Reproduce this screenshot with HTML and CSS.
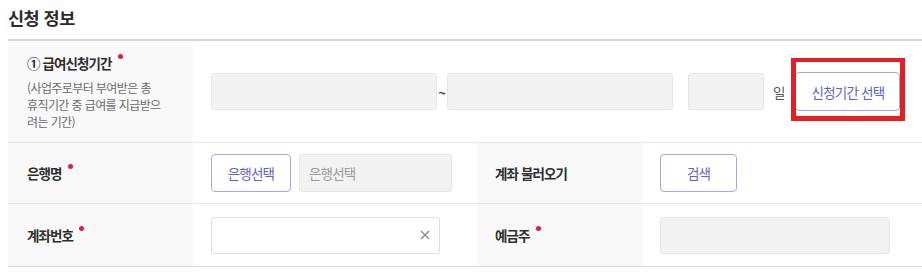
FILE: index.html
```html
<!DOCTYPE html>
<html lang="ko">
<head>
<meta charset="utf-8">
<title>신청 정보</title>
<link rel="stylesheet" href="styles.css">
</head>
<body>
<div class="page">
  <h2 class="title">신청 정보</h2>
  <div class="form">
    <div class="row row-tall">
      <div class="label label-first">
        <div class="label-main">① 급여신청기간<span class="req"></span></div>
        <div class="label-sub">(사업주로부터 부여받은 총<br>휴직기간 중 급여를 지급받으<br>려는 기간)</div>
      </div>
      <div class="cell cell-wide">
        <div class="field field-gray w-date"></div>
        <span class="tilde">~</span>
        <div class="field field-gray w-date"></div>
        <div class="field field-gray w-days"></div>
        <span class="unit">일</span>
        <div class="btn-wrap">
          <button class="btn btn-period">신청기간 선택</button>
          <span class="highlight"></span>
        </div>
      </div>
    </div>
    <div class="row">
      <div class="label label-first"><div class="label-main">은행명<span class="req"></span></div></div>
      <div class="cell">
        <button class="btn btn-bank">은행선택</button>
        <div class="field field-gray w-bank"><span class="placeholder">은행선택</span></div>
      </div>
      <div class="label label-second"><div class="label-main">계좌 불러오기</div></div>
      <div class="cell cell-second">
        <button class="btn btn-search">검색</button>
      </div>
    </div>
    <div class="row row-last">
      <div class="label label-first"><div class="label-main">계좌번호<span class="req"></span></div></div>
      <div class="cell">
        <div class="field field-white w-account">
          <svg class="clear" width="10" height="10" viewBox="0 0 10 10"><path d="M1 1L9 9M9 1L1 9" stroke="#8a8a8a" stroke-width="1.4" fill="none"/></svg>
        </div>
      </div>
      <div class="label label-second"><div class="label-main">예금주<span class="req"></span></div></div>
      <div class="cell cell-second">
        <div class="field field-gray w-holder"></div>
      </div>
    </div>
  </div>
</div>
</body>
</html>
```
FILE: styles.css
```css
* { box-sizing: border-box; }
html, body { margin: 0; padding: 0; background: #fff; }
body {
  font-family: "Noto Sans CJK KR", "Noto Sans", sans-serif;
  color: #333;
}
.page { padding-left: 8px; }
.title {
  margin: 6px 0 9px;
  font-size: 17.5px;
  line-height: 24px;
  font-weight: 700;
  letter-spacing: -0.5px;
  color: #2b2b2b;
}
.form {
  border-top: 2px solid #d6d6d6;
}
.row {
  display: grid;
  grid-template-columns: 185px 284px 165px 280px;
  border-bottom: 1px solid #e6e6e6;
  height: 61px;
}
.row-tall { height: 102px; }
.row-last { height: 63px; border-bottom: 1px solid #d9d9d9; }
.label {
  background: #f8f8f8;
  display: flex;
  flex-direction: column;
  justify-content: center;
}
.label-first { padding-left: 19px; }
.label-second { padding-left: 18px; }
.label-main {
  font-size: 13.5px;
  line-height: 20px;
  font-weight: 700;
  letter-spacing: -0.9px;
  color: #2e2e2e;
}
.label-sub {
  margin-top: 6px;
  font-size: 12px;
  line-height: 17px;
  letter-spacing: -0.6px;
  color: #6a6a6a;
}
.req {
  display: inline-block;
  width: 5px;
  height: 5px;
  border-radius: 50%;
  background: #e5194a;
  margin-left: 6px;
  vertical-align: top;
  margin-top: 1px;
}
.cell {
  display: flex;
  align-items: center;
  padding-left: 18px;
}
.cell-wide { grid-column: 2 / 5; }
.field {
  height: 37px;
  border-radius: 3px;
  display: flex;
  align-items: center;
}
.field-gray { background: #f2f2f2; border: 1px solid #e5e5e5; }
.field-white { background: #fff; border: 1px solid #dedede; }
.w-date { width: 226px; }
.w-days { width: 76px; margin-left: 15px; }
.w-bank { width: 153px; height: 38px; margin-left: 8px; padding-left: 9px; }
.w-account { width: 229px; justify-content: flex-end; padding-right: 9px; }
.w-holder { width: 230px; }
.tilde {
  width: 10px;
  text-align: center;
  font-size: 13px;
  font-weight: 700;
  color: #444;
  margin-top: 2px;
}
.unit {
  margin-left: 9px;
  font-size: 13.5px;
  color: #555;
}
.placeholder {
  font-size: 13.5px;
  letter-spacing: -0.8px;
  color: #999;
}
.btn {
  font-family: inherit;
  background: #fff;
  border: 1px solid #a3a7ea;
  border-radius: 4px;
  color: #5c62cc;
  font-size: 13.5px;
  letter-spacing: -0.8px;
  padding: 0;
  cursor: pointer;
}
.btn-wrap {
  position: relative;
  margin-left: 10px;
  display: flex;
}
.btn-period { width: 105px; height: 39px; }
.btn-bank { width: 80px; height: 38px; }
.btn-search { width: 77px; height: 38px; }
.highlight {
  position: absolute;
  left: -4px;
  right: -5px;
  top: -14px;
  bottom: -10px;
  border: 5px solid #e31e24;
  border-top-width: 4px;
  pointer-events: none;
}
.clear { display: block; }
```
